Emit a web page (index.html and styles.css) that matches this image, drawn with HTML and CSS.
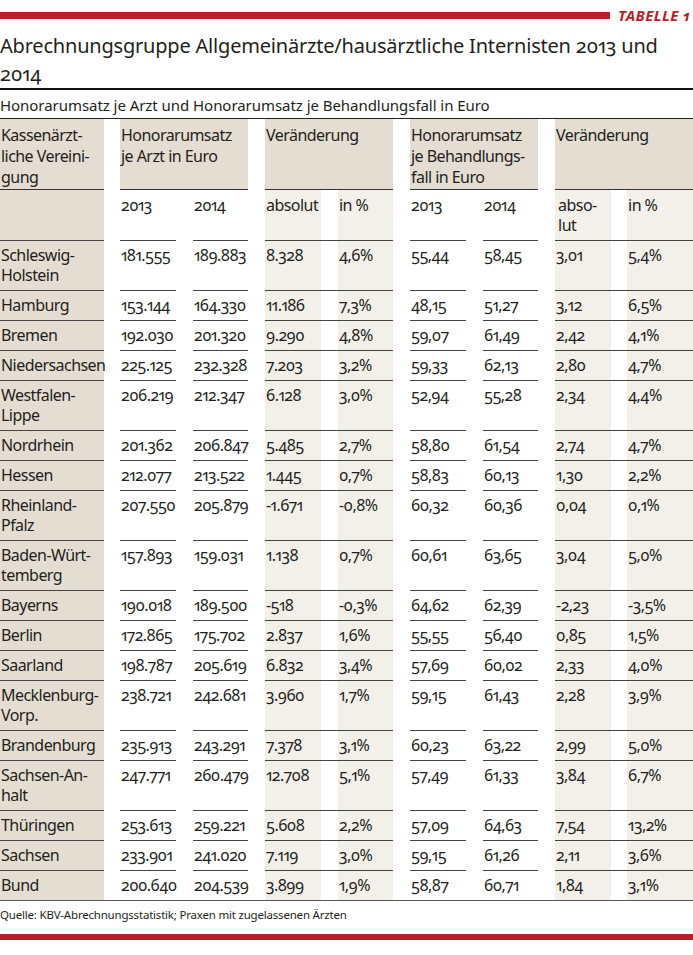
FILE: index.html
```html
<!DOCTYPE html>
<html lang="de">
<head>
<meta charset="utf-8">
<title>Tabelle 1</title>
<link rel="stylesheet" href="styles.css">
</head>
<body>
<div class="top"><div class="bar"></div><div class="tag">TABELLE 1</div></div>
<h1 class="title">Abrechnungsgruppe Allgemeinärzte/hausärztliche Internisten 2013 und 2014</h1>
<p class="subtitle">Honorarumsatz je Arzt und Honorarumsatz je Behandlungsfall in Euro</p>
<table class="tbl">
<colgroup>
<col class="w104"><col class="w16"><col class="w56"><col class="w17"><col class="w55"><col class="w17"><col class="w56"><col class="w17"><col class="w55"><col class="w17"><col class="w56"><col class="w17"><col class="w55"><col class="w17"><col class="w56"><col class="w16"><col class="w66">
</colgroup>
<thead>
<tr class="hr">
<th class="h">Kassenärzt-<br>liche Vereini-<br>gung</th><th class="g"></th>
<th class="h" colspan="3">Honorarumsatz<br>je Arzt in Euro</th><th class="g"></th>
<th class="h" colspan="3">Veränderung</th><th class="g"></th>
<th class="h" colspan="3">Honorarumsatz<br>je Behandlungs-<br>fall in Euro</th><th class="g"></th>
<th class="h" colspan="3">Veränderung</th>
</tr>
<tr class="sr">
<td class="b"></td><td class="g"></td>
<td>2013</td><td class="g"></td><td>2014</td><td class="g"></td>
<td class="l">absolut</td><td class="g"></td><td class="l">in %</td><td class="g"></td>
<td>2013</td><td class="g"></td><td>2014</td><td class="g"></td>
<td class="l ind">abso-<br>lut</td><td class="g"></td><td class="l">in %</td>
</tr>
</thead>
<tbody>
<tr><td class="b">Schleswig-<br>Holstein</td><td class="g"></td><td>181.555</td><td class="g"></td><td>189.883</td><td class="g"></td><td class="l">8.328</td><td class="gl"></td><td class="l">4,6%</td><td class="g"></td><td>55,44</td><td class="g"></td><td>58,45</td><td class="g"></td><td class="l">3,01</td><td class="gl"></td><td class="l">5,4%</td></tr>
<tr><td class="b">Hamburg</td><td class="g"></td><td>153.144</td><td class="g"></td><td>164.330</td><td class="g"></td><td class="l">11.186</td><td class="gl"></td><td class="l">7,3%</td><td class="g"></td><td>48,15</td><td class="g"></td><td>51,27</td><td class="g"></td><td class="l">3,12</td><td class="gl"></td><td class="l">6,5%</td></tr>
<tr><td class="b">Bremen</td><td class="g"></td><td>192.030</td><td class="g"></td><td>201.320</td><td class="g"></td><td class="l">9.290</td><td class="gl"></td><td class="l">4,8%</td><td class="g"></td><td>59,07</td><td class="g"></td><td>61,49</td><td class="g"></td><td class="l">2,42</td><td class="gl"></td><td class="l">4,1%</td></tr>
<tr><td class="b">Niedersachsen</td><td class="g"></td><td>225.125</td><td class="g"></td><td>232.328</td><td class="g"></td><td class="l">7.203</td><td class="gl"></td><td class="l">3,2%</td><td class="g"></td><td>59,33</td><td class="g"></td><td>62,13</td><td class="g"></td><td class="l">2,80</td><td class="gl"></td><td class="l">4,7%</td></tr>
<tr><td class="b">Westfalen-<br>Lippe</td><td class="g"></td><td>206.219</td><td class="g"></td><td>212.347</td><td class="g"></td><td class="l">6.128</td><td class="gl"></td><td class="l">3,0%</td><td class="g"></td><td>52,94</td><td class="g"></td><td>55,28</td><td class="g"></td><td class="l">2,34</td><td class="gl"></td><td class="l">4,4%</td></tr>
<tr><td class="b">Nordrhein</td><td class="g"></td><td>201.362</td><td class="g"></td><td>206.847</td><td class="g"></td><td class="l">5.485</td><td class="gl"></td><td class="l">2,7%</td><td class="g"></td><td>58,80</td><td class="g"></td><td>61,54</td><td class="g"></td><td class="l">2,74</td><td class="gl"></td><td class="l">4,7%</td></tr>
<tr><td class="b">Hessen</td><td class="g"></td><td>212.077</td><td class="g"></td><td>213.522</td><td class="g"></td><td class="l">1.445</td><td class="gl"></td><td class="l">0,7%</td><td class="g"></td><td>58,83</td><td class="g"></td><td>60,13</td><td class="g"></td><td class="l">1,30</td><td class="gl"></td><td class="l">2,2%</td></tr>
<tr><td class="b">Rheinland-<br>Pfalz</td><td class="g"></td><td>207.550</td><td class="g"></td><td>205.879</td><td class="g"></td><td class="l">-1.671</td><td class="gl"></td><td class="l">-0,8%</td><td class="g"></td><td>60,32</td><td class="g"></td><td>60,36</td><td class="g"></td><td class="l">0,04</td><td class="gl"></td><td class="l">0,1%</td></tr>
<tr><td class="b">Baden-Würt-<br>temberg</td><td class="g"></td><td>157.893</td><td class="g"></td><td>159.031</td><td class="g"></td><td class="l">1.138</td><td class="gl"></td><td class="l">0,7%</td><td class="g"></td><td>60,61</td><td class="g"></td><td>63,65</td><td class="g"></td><td class="l">3,04</td><td class="gl"></td><td class="l">5,0%</td></tr>
<tr><td class="b">Bayerns</td><td class="g"></td><td>190.018</td><td class="g"></td><td>189.500</td><td class="g"></td><td class="l">-518</td><td class="gl"></td><td class="l">-0,3%</td><td class="g"></td><td>64,62</td><td class="g"></td><td>62,39</td><td class="g"></td><td class="l">-2,23</td><td class="gl"></td><td class="l">-3,5%</td></tr>
<tr><td class="b">Berlin</td><td class="g"></td><td>172.865</td><td class="g"></td><td>175.702</td><td class="g"></td><td class="l">2.837</td><td class="gl"></td><td class="l">1,6%</td><td class="g"></td><td>55,55</td><td class="g"></td><td>56,40</td><td class="g"></td><td class="l">0,85</td><td class="gl"></td><td class="l">1,5%</td></tr>
<tr><td class="b">Saarland</td><td class="g"></td><td>198.787</td><td class="g"></td><td>205.619</td><td class="g"></td><td class="l">6.832</td><td class="gl"></td><td class="l">3,4%</td><td class="g"></td><td>57,69</td><td class="g"></td><td>60,02</td><td class="g"></td><td class="l">2,33</td><td class="gl"></td><td class="l">4,0%</td></tr>
<tr><td class="b">Mecklenburg-<br>Vorp.</td><td class="g"></td><td>238.721</td><td class="g"></td><td>242.681</td><td class="g"></td><td class="l">3.960</td><td class="gl"></td><td class="l">1,7%</td><td class="g"></td><td>59,15</td><td class="g"></td><td>61,43</td><td class="g"></td><td class="l">2,28</td><td class="gl"></td><td class="l">3,9%</td></tr>
<tr><td class="b">Brandenburg</td><td class="g"></td><td>235.913</td><td class="g"></td><td>243.291</td><td class="g"></td><td class="l">7.378</td><td class="gl"></td><td class="l">3,1%</td><td class="g"></td><td>60,23</td><td class="g"></td><td>63,22</td><td class="g"></td><td class="l">2,99</td><td class="gl"></td><td class="l">5,0%</td></tr>
<tr><td class="b">Sachsen-An-<br>halt</td><td class="g"></td><td>247.771</td><td class="g"></td><td>260.479</td><td class="g"></td><td class="l">12.708</td><td class="gl"></td><td class="l">5,1%</td><td class="g"></td><td>57,49</td><td class="g"></td><td>61,33</td><td class="g"></td><td class="l">3,84</td><td class="gl"></td><td class="l">6,7%</td></tr>
<tr><td class="b">Thüringen</td><td class="g"></td><td>253.613</td><td class="g"></td><td>259.221</td><td class="g"></td><td class="l">5.608</td><td class="gl"></td><td class="l">2,2%</td><td class="g"></td><td>57,09</td><td class="g"></td><td>64,63</td><td class="g"></td><td class="l">7,54</td><td class="gl"></td><td class="l">13,2%</td></tr>
<tr><td class="b">Sachsen</td><td class="g"></td><td>233.901</td><td class="g"></td><td>241.020</td><td class="g"></td><td class="l">7.119</td><td class="gl"></td><td class="l">3,0%</td><td class="g"></td><td>59,15</td><td class="g"></td><td>61,26</td><td class="g"></td><td class="l">2,11</td><td class="gl"></td><td class="l">3,6%</td></tr>
<tr><td class="b">Bund</td><td class="g"></td><td>200.640</td><td class="g"></td><td>204.539</td><td class="g"></td><td class="l">3.899</td><td class="gl"></td><td class="l">1,9%</td><td class="g"></td><td>58,87</td><td class="g"></td><td>60,71</td><td class="g"></td><td class="l">1,84</td><td class="gl"></td><td class="l">3,1%</td></tr>
</tbody>
</table>
<p class="source">Quelle: KBV-Abrechnungsstatistik; Praxen mit zugelassenen Ärzten</p>
<div class="bottom-bar"></div>
</body>
</html>
```
FILE: styles.css
```css
body {
  margin: 0;
  width: 693px;
  font-family: "Noto Sans", "Open Sans", sans-serif;
  font-variant-numeric: oldstyle-nums proportional-nums;
  color: #231f20;
  background: #fff;
}

.top {
  display: flex;
  align-items: center;
  padding-top: 7px;
  height: 16px;
}
.top .bar {
  flex: 1;
  height: 7px;
  background: #b81f2a;
}
.top .tag {
  margin-left: 8px;
  margin-right: 3px;
  color: #b81f2a;
  font-weight: 700;
  font-style: italic;
  font-size: 15px;
  line-height: 16px;
  letter-spacing: 0.4px;
}

.title {
  margin: 9px 0 0;
  font-size: 20px;
  font-weight: 400;
  line-height: 28px;
  letter-spacing: -0.2px;
  border-bottom: 2px solid #111;
}

.subtitle {
  margin: 0;
  padding: 5px 0 3px;
  font-size: 15px;
  line-height: 20px;
  letter-spacing: -0.05px;
  border-bottom: 1px solid #222;
}

.tbl {
  width: 693px;
  table-layout: fixed;
  border-collapse: separate;
  border-spacing: 0;
  font-size: 16px;
  letter-spacing: -0.55px;
  border-bottom: 1px solid #555;
}
.w104 { width: 104px; }
.w16 { width: 16px; }
.w17 { width: 17px; }
.w55 { width: 55px; }
.w56 { width: 56px; }
.w66 { width: 66px; }

.tbl th, .tbl td {
  padding: 0 0 0 1px;
  text-align: left;
  vertical-align: top;
  white-space: nowrap;
  font-weight: 400;
}

.hr th {
  padding-top: 6px;
  padding-bottom: 1px;
  line-height: 21px;
}
.hr th.h {
  background: #e3ded1;
  border-bottom: 1px solid #333;
}

.sr td {
  padding-top: 5px;
  padding-bottom: 5px;
  line-height: 20px;
}

.tbl tbody td {
  border-top: 1px solid #444;
  padding-top: 4px;
  padding-bottom: 5px;
  line-height: 20px;
}
.tbl tbody td.g {
  border-top: none;
}

.tbl .b { background: #e3ded1; }
.tbl .l { background: #f2f0e9; }
.tbl .ind { padding-left: 3px; }

.source {
  margin: 6px 0 0;
  font-size: 11.5px;
  line-height: 16px;
  letter-spacing: -0.2px;
}

.bottom-bar {
  margin-top: 11px;
  height: 6px;
  background: #b81f2a;
}
```
